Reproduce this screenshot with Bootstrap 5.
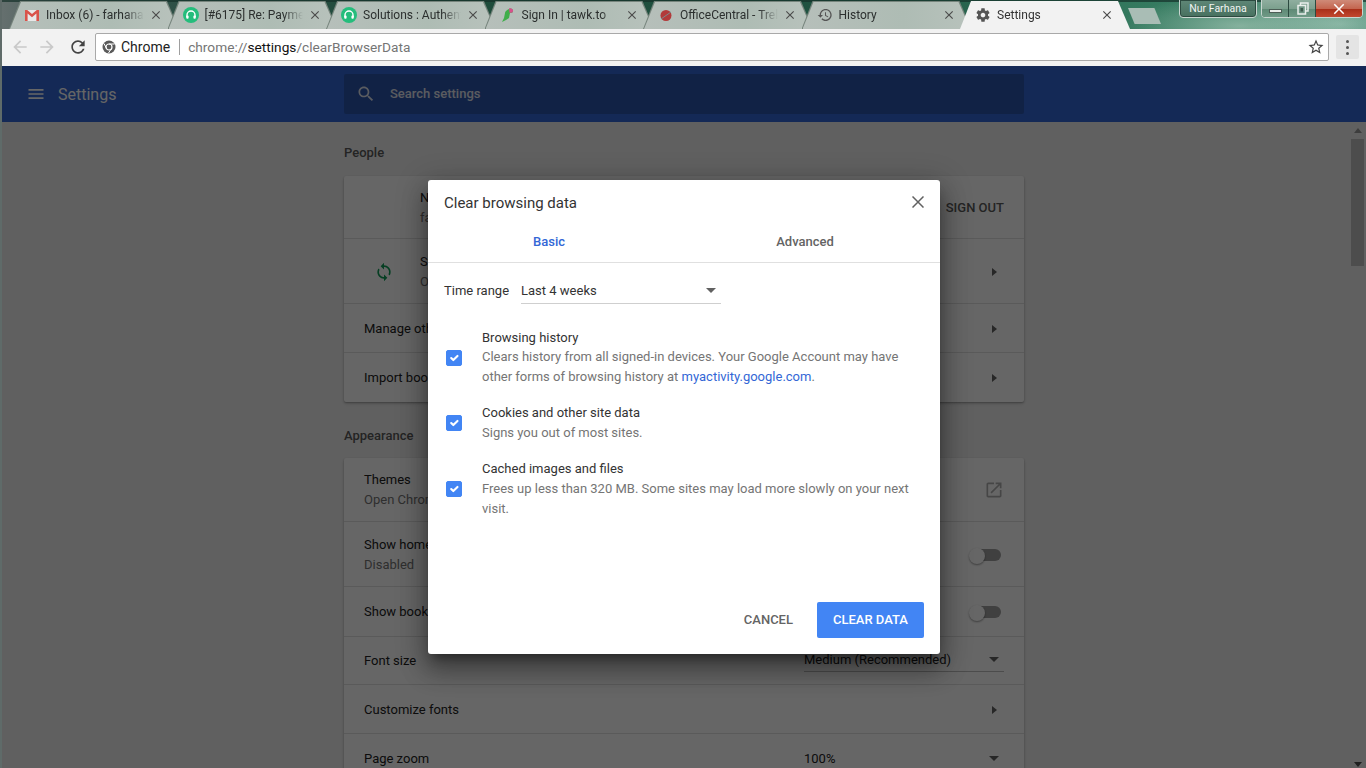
<!DOCTYPE html>
<html lang="en">
<head>
<meta charset="utf-8">
<title>Settings</title>
<link href="https://cdn.jsdelivr.net/npm/bootstrap@5.3.0/dist/css/bootstrap.min.css" rel="stylesheet">
<style>
html,body{height:768px;overflow:hidden;margin:0}
body{font-family:Roboto,"Liberation Sans",sans-serif;font-size:13px;line-height:20px;color:#333;background:#777}
.app-root{width:1366px;height:768px;border-left:2px solid #5f6b69;display:flex;flex-direction:column;position:relative;overflow:hidden}
.ico{display:block;flex:none}
.ico:not([fill]){fill:currentColor}
/* tab strip */
.strip{height:29px;flex:none;margin-left:-2px;position:relative;overflow:hidden;background:radial-gradient(ellipse 120px 30px at 1240px 26px,rgba(190,215,200,.55),transparent),radial-gradient(ellipse 90px 30px at 1340px 24px,rgba(170,205,190,.6),transparent),linear-gradient(90deg,#66706f 0,#33524a 8%,#1e4a3a 30%,#1f5240 60%,#347a5f 84%,#4f8e78 100%)}
.strip-top{height:2px;background:#15302a;position:absolute;left:0;right:0;top:0;opacity:.7}
.tabs-row{position:absolute;left:9px;top:1px;display:flex}
.tabx{width:170px;height:28px;margin-right:-11.5px;position:relative;display:flex;align-items:center;padding:0 16px 0 15px;font-size:12px;color:#2b2f2e;clip-path:polygon(0 100%,11px 0,calc(100% - 12px) 0,100% 100%);background:#76847c}
.tabx::before{content:"";position:absolute;inset:1px 1px 0 1px;clip-path:polygon(0 100%,11px 0,calc(100% - 12px) 0,100% 100%);background:linear-gradient(90deg,#b6bfba,#aebcb4 60%,#b8c2bc)}
.tabx>*{position:relative}
.tabx.is-on{background:#f2f2f2;z-index:2;color:#333}
.tabx.is-on::before{background:#f2f2f2}
.tab-ic{width:16px;height:16px;margin:0 6px 0 0;color:#555}
.tab-tx{flex:1;white-space:nowrap;overflow:hidden;-webkit-mask-image:linear-gradient(90deg,#000 78%,transparent 97%);mask-image:linear-gradient(90deg,#000 78%,transparent 97%)}
.tab-x{width:14px;height:14px;color:#4c4c4c;margin-left:2px}
.newtab{position:absolute;left:1128px;top:8px;width:33px;height:16px;background:#a9bdb5;clip-path:polygon(0 0,80% 0,100% 100%,20% 100%)}
.prof{position:absolute;left:1179px;top:-1px;width:78px;height:19px;border:1px solid #c9d6d0;border-radius:0 0 4px 4px;background:linear-gradient(180deg,#5f8777,#47705f);color:#f2f5f3;font-size:10.5px;line-height:17px;text-align:center;box-shadow:inset 0 0 0 1px #2c4a40}
.winbtns{position:absolute;left:1261px;top:-1px;width:102px;height:19px;display:flex;border:1px solid #c9d6d0;border-radius:0 0 4px 4px;overflow:hidden;box-shadow:inset 0 0 0 1px #2c4a40}
.winb{display:flex;align-items:center;justify-content:center;background:linear-gradient(180deg,#8fae9f 0,#7ca08e 50%,#5f8a76 55%,#6f9a86 100%);border-right:1px solid #2c4a40;width:27px}
.winb.is-close{flex:1;border-right:0;background:linear-gradient(180deg,#cf8a78 0,#c46650 50%,#a9301a 55%,#c2482f 100%);color:#fff}
.glyph-min{width:13px;height:4px;background:#e9eeeb;border:1px solid #4b5d55;margin-top:4px}
/* toolbar */
.tbar{height:37px;flex:none;background:#f2f2f2;display:flex;align-items:center;position:relative}
.tbtn-dis{color:#c9c9c9;width:20px;height:20px}
.tbtn-rel{color:#444;width:20px;height:20px}
.navbtns{display:flex;align-items:center;padding-left:8px;gap:7px;width:93px;margin-top:-1px}
.omni{width:1234px;height:28px;background:#fff;border:1px solid #a9a9a9;border-radius:2px;display:flex;align-items:center;padding-left:6px;font-size:14px;color:#757575;position:relative;margin-top:-2px}
.omni-chip{color:#222;padding-left:5px;padding-right:10px;margin-right:8px;position:relative}
.omni-chip::after{content:"";position:absolute;right:0;top:2px;bottom:2px;width:1px;background:#9e9e9e}
.omni-url{font-size:13.7px}
.omni b{font-weight:400;color:#111}
.omni-star{margin-left:auto;width:18px;height:18px;color:#444;margin-right:3px}
.menu3{width:23px;height:24px;background:#e4e4e4;border-radius:2px;margin-left:7px;margin-top:-1px;display:flex;flex-direction:column;align-items:center;justify-content:center;gap:3px}
.menu3 i{display:block;width:3px;height:3px;background:#555;border-radius:50%}
/* page */
.hdr{height:56px;flex:none;background:#3367d6;color:#fff;display:flex;align-items:center}
.hdr-left{width:342px;flex:none;display:flex;align-items:center;padding-left:24px;gap:12px;font-size:16px}
.hdr-left span{position:relative;top:1px}
.srch{width:680px;height:40px;background:#2b55ad;border-radius:2px;display:flex;align-items:center;padding-left:12px;gap:14px;font-weight:500;color:#e2e6f0}
.pg{flex:1;background:#f1f1f1;position:relative;min-height:0;overflow:hidden}
.pg-col{width:680px;margin-left:342px}
.sec-t{font-weight:500;color:#5a5a5a;line-height:20px}
.sec-t.first{padding-top:21px;padding-bottom:13px}
.sec-t.next{padding-top:24px;padding-bottom:12px}
.cardx{border:0;border-radius:2px;box-shadow:0 1px 2px rgba(0,0,0,.3),0 2px 5px rgba(0,0,0,.1);overflow:hidden;--bs-card-bg:#fff}
.rowx{display:flex;align-items:center;padding:0 20px;border-color:#e0e0e0;background:#fff;color:#222;font-size:13px;line-height:20px}
.rowx.low{padding-top:2px}
.rowx small{display:block;color:#757575;font-size:13px}
.h63{height:63px}.h65{height:65px}.h49{height:49px}.h64{height:64px}.h50{height:50px}.h48{height:48px}
.r-end{margin-left:auto}
.tri-r{width:0;height:0;border-left:5px solid #616161;border-top:4.5px solid transparent;border-bottom:4.5px solid transparent;margin-right:7px}
.tri-d{width:0;height:0;border-top:5px solid #616161;border-left:5.5px solid transparent;border-right:5.5px solid transparent}
.sel-set{margin-left:auto;width:200px;display:flex;align-items:center;justify-content:space-between;border-bottom:1px solid #bdbdbd;height:24px;padding:1px 5px 0 0;margin-top:-2px}
.sel-set.bare{margin-top:0}
.sw{position:relative;width:32px;height:16px;margin-right:3px;display:block}
.sw.dn{margin-top:2px}
.sw::before{content:"";position:absolute;left:6px;right:0;top:1px;height:12px;background:#a0a0a0;border-radius:6px}
.sw::after{content:"";position:absolute;left:0;top:0;width:16px;height:16px;background:#fff;border-radius:50%;box-shadow:0 1px 2px rgba(0,0,0,.4)}
.signout{font-weight:500;color:#5a5a5a;font-size:13px}
.syncic{width:20px;height:20px;color:#0f9d58;margin:0 26px 0 10px}
.extic{color:#b0b0b0}
.indent{padding-left:56px}
.sbar{position:absolute;right:0;top:0;bottom:0;width:16px;background:#f1f1f1}
.sbar-th{position:absolute;left:1px;right:2px;top:17px;height:127px;background:#c1c1c1}
.sbar-up{position:absolute;left:3.5px;top:6px;border-bottom:5px solid #9a9a9a;border-left:4px solid transparent;border-right:4px solid transparent}
.sbar-dn{position:absolute;left:3.5px;bottom:1px;border-top:5px solid #505050;border-left:4px solid transparent;border-right:4px solid transparent}
.scrim{position:absolute;left:-2px;right:0;top:66px;bottom:0;background:rgba(0,0,0,.6);z-index:5}
/* dialog */
.dlg{position:absolute;left:428px;top:180px;width:512px;height:474px;z-index:6;border:0;border-radius:3px;display:flex;flex-direction:column;background:#fff;box-shadow:0 16px 24px 2px rgba(0,0,0,.28),0 6px 30px 5px rgba(0,0,0,.2),0 8px 10px -5px rgba(0,0,0,.4)}
.dlg-h{height:46px;flex:none;display:flex;align-items:center;padding:0 16px 0 16px;font-size:15px;color:#333}
.dlg-x{width:12px;height:12px;stroke:#616161;stroke-width:1.5;margin-left:auto;margin-top:-2px}
.dlg-tabs{height:37px;flex:none;display:flex;border-bottom:1px solid #e0e0e0;margin:0;flex-wrap:nowrap}
.dlg-tab{width:256px;text-align:center;font-weight:500;color:#646464;padding:0;line-height:32px;position:relative;left:-7px}
.dlg-tab.is-on{color:#3367d6}
.dlg-b{flex:1;padding:16px 16px 0;min-height:0}
.tr-row{display:flex;align-items:center;color:#333;height:24px;margin-bottom:25px}
.tr-sel{margin-left:12px;width:200px;height:25px;border-bottom:1px solid #cfcfcf;display:flex;align-items:center;justify-content:space-between;padding:1px 5px 1px 0}
.cb-row{display:flex;align-items:center;margin-bottom:16px;line-height:20px}
.cb-row .form-check-input{width:16px;height:16px;margin:0 20px 0 2px;flex:none;border-radius:2px;background-color:#4285f4;border-color:#4285f4}
.cb-t{color:#333}
.cb-t.tight{margin-bottom:-1px}
.cb-d{color:#757575}
.cb-d a{color:#3367d6;text-decoration:none}
.dlg-f{display:flex;justify-content:flex-end;gap:8px;padding:0 16px 16px}
.btn-c,.btn-k{font-size:13px;font-weight:500;height:36px;padding:0 16px;border-radius:2px;text-transform:uppercase;line-height:36px;border:0}
.btn-c{color:#646464;background:transparent}
.btn-k{color:#fff;background:#4285f4}
</style>
</head>
<body>
<svg width="0" height="0" class="position-absolute">
<defs>
<symbol id="i-x" viewBox="0 0 24 24"><path d="M19 6.41L17.59 5 12 10.59 6.41 5 5 6.41 10.59 12 5 17.59 6.41 19 12 13.41 17.59 19 19 17.59 13.41 12z"/></symbol>
<symbol id="i-hs" viewBox="0 0 16 16"><circle cx="8" cy="8" r="8" fill="#25bd7c"/><path d="M4 10V8a4 4 0 0 1 8 0v2" fill="none" stroke="#fff" stroke-width="1.4"/><rect x="3.2" y="8.4" width="2.4" height="3.4" rx="1" fill="#fff"/><rect x="10.4" y="8.4" width="2.4" height="3.4" rx="1" fill="#fff"/></symbol>
</defs>
</svg>
<div class="app-root">
  <div class="strip">
    <div class="strip-top"></div>
    <div class="tabs-row">
      <div class="tabx"><svg class="ico tab-ic" viewBox="0 0 16 16"><rect x="1" y="3" width="14" height="11" fill="#e8e8e8"/><path d="M1 3h2.200L8 7l4.800-4H15v11h-2.600V6.600L8 10.200 3.600 6.600V14H1z" fill="#d9534a"/></svg><span class="tab-tx">Inbox (6) - farhana@officecentral</span><svg class="ico tab-x"><use href="#i-x"/></svg></div>
      <div class="tabx"><svg class="ico tab-ic"><use href="#i-hs"/></svg><span class="tab-tx">[#6175] Re: Payment</span><svg class="ico tab-x"><use href="#i-x"/></svg></div>
      <div class="tabx"><svg class="ico tab-ic"><use href="#i-hs"/></svg><span class="tab-tx">Solutions : Authentication</span><svg class="ico tab-x"><use href="#i-x"/></svg></div>
      <div class="tabx"><svg class="ico tab-ic" viewBox="0 0 16 16"><path d="M9 2c2-1 4 0 4 2s-2 2-3 2l-1 5-3 2-4 2 2-4 1-5c0-2 2-3 4-4z" fill="#3fae4a"/><path d="M9 1.500c2-.8 4 .2 4 2.300s-2 2.200-3.500 2z" fill="#d8508c"/></svg><span class="tab-tx">Sign In | tawk.to</span><svg class="ico tab-x"><use href="#i-x"/></svg></div>
      <div class="tabx"><svg class="ico tab-ic" viewBox="0 0 16 16"><circle cx="8" cy="8.500" r="5.500" fill="#b23a3a"/><path d="M3 12L13 5" stroke="#7b8a8a" stroke-width="1"/></svg><span class="tab-tx">OfficeCentral - Trello board</span><svg class="ico tab-x"><use href="#i-x"/></svg></div>
      <div class="tabx"><svg class="ico tab-ic" viewBox="0 0 24 24"><path d="M13 3c-4.970 0-9 4.030-9 9H1l3.890 3.890.07.14L9 12H6c0-3.870 3.130-7 7-7s7 3.130 7 7-3.130 7-7 7c-1.930 0-3.680-.79-4.940-2.060l-1.420 1.420C8.270 19.990 10.510 21 13 21c4.970 0 9-4.030 9-9s-4.030-9-9-9zm-1 5v5l4.280 2.540.72-1.210-3.500-2.080V8H12z"/></svg><span class="tab-tx">History</span><svg class="ico tab-x"><use href="#i-x"/></svg></div>
      <div class="tabx is-on"><svg class="ico tab-ic" viewBox="0 0 24 24"><path d="M19.430 12.980c.04-.32.07-.64.07-.98s-.03-.66-.07-.98l2.110-1.650c.19-.15.24-.42.12-.64l-2-3.460c-.12-.22-.39-.3-.61-.22l-2.490 1c-.52-.4-1.080-.73-1.690-.98l-.38-2.650C14.460 2.180 14.250 2 14 2h-4c-.25 0-.46.18-.49.42l-.38 2.650c-.61.25-1.170.59-1.690.98l-2.490-1c-.23-.09-.49 0-.61.22l-2 3.460c-.13.22-.07.49.12.64l2.110 1.650c-.04.32-.07.65-.07.98s.03.66.07.98l-2.110 1.650c-.19.15-.24.42-.12.64l2 3.460c.12.22.39.3.61.22l2.490-1c.52.4 1.080.73 1.690.98l.38 2.650c.03.24.24.42.49.42h4c.25 0 .46-.18.49-.42l.38-2.650c.61-.25 1.170-.59 1.690-.98l2.490 1c.23.09.49 0 .61-.22l2-3.460c.12-.22.07-.49-.12-.64l-2.110-1.650zM12 15.500c-1.930 0-3.500-1.570-3.500-3.500s1.570-3.500 3.500-3.500 3.500 1.570 3.500 3.500-1.570 3.500-3.500 3.500z"/></svg><span class="tab-tx">Settings</span><svg class="ico tab-x"><use href="#i-x"/></svg></div>
    </div>
    <div class="newtab"></div>
    <div class="prof">Nur Farhana</div>
    <div class="winbtns">
      <div class="winb"><span class="glyph-min"></span></div>
      <div class="winb"><svg class="ico" width="13" height="13" viewBox="0 0 13 13"><rect x="4.500" y="1" width="7.500" height="8" fill="none" stroke="#e9eeeb" stroke-width="1.500"/><rect x="2" y="3.500" width="7.500" height="8.500" fill="#6f9685" stroke="#e9eeeb" stroke-width="1.500"/><rect x="4.500" y="6" width="2.500" height="3.500" fill="#3f5a4e"/></svg></div>
      <div class="winb is-close"><svg class="ico" width="18" height="18"><use href="#i-x"/></svg></div>
    </div>
  </div>

  <div class="tbar">
    <div class="navbtns">
      <svg class="ico tbtn-dis" viewBox="0 0 24 24"><path d="M20 11H7.830l5.590-5.590L12 4l-8 8 8 8 1.410-1.410L7.830 13H20v-2z"/></svg>
      <svg class="ico tbtn-dis" viewBox="0 0 24 24"><path d="M12 4l-1.410 1.410L16.170 11H4v2h12.170l-5.580 5.590L12 20l8-8z"/></svg>
      <svg class="ico tbtn-rel ms-1" viewBox="0 0 24 24"><path d="M17.650 6.350C16.200 4.900 14.210 4 12 4c-4.420 0-7.990 3.580-7.990 8s3.570 8 7.990 8c3.730 0 6.840-2.550 7.730-6h-2.080c-.82 2.330-3.040 4-5.650 4-3.310 0-6-2.690-6-6s2.690-6 6-6c1.660 0 3.140.69 4.220 1.780L13 11h7V4l-2.350 2.350z"/></svg>
    </div>
    <div class="omni">
      <svg class="ico" width="14" height="14" viewBox="0 0 14 14"><circle cx="7" cy="7" r="6.500" fill="#5a5a5a"/><circle cx="7" cy="7" r="3" fill="#5a5a5a" stroke="#fff" stroke-width="1.200"/><path d="M7 4h5.500M4.500 8.500L2 3.500M9.500 8.500L6.500 13" stroke="#fff" stroke-width="1"/></svg>
      <span class="omni-chip">Chrome</span>
      <span class="omni-url">chrome://<b>settings</b>/clearBrowserData</span>
      <svg class="ico omni-star" viewBox="0 0 24 24"><path d="M22 9.240l-7.190-.62L12 2 9.190 8.630 2 9.240l5.460 4.730L5.820 21 12 17.270 18.180 21l-1.630-7.030L22 9.240zM12 15.400l-3.760 2.270 1-4.280-3.320-2.880 4.380-.38L12 6.100l1.710 4.040 4.380.38-3.320 2.880 1 4.280L12 15.400z"/></svg>
    </div>
    <div class="menu3"><i></i><i></i><i></i></div>
  </div>

  <div class="hdr">
    <div class="hdr-left"><svg class="ico" width="20" height="20" viewBox="0 0 24 24"><path d="M3 18h18v-2H3v2zm0-5h18v-2H3v2zm0-7v2h18V6H3z"/></svg><span>Settings</span></div>
    <div class="srch"><svg class="ico" width="20" height="20" viewBox="0 0 24 24"><path d="M15.500 14h-.79l-.28-.27C15.410 12.590 16 11.110 16 9.500 16 5.910 13.090 3 9.500 3S3 5.910 3 9.500 5.910 16 9.500 16c1.610 0 3.090-.59 4.230-1.570l.27.28v.79l5 4.990L20.490 19l-4.990-5zm-6 0C7.010 14 5 11.990 5 9.500S7.010 5 9.500 5 14 7.010 14 9.500 11.990 14 9.500 14z"/></svg><span>Search settings</span></div>
  </div>

  <div class="pg">
    <div class="pg-col">
      <div class="sec-t first">People</div>
      <div class="card cardx">
        <div class="list-group list-group-flush">
          <div class="list-group-item rowx h63 low"><div class="indent"><div>Nur Farhana</div><small>farhana@officecentral.asia</small></div><span class="r-end signout">SIGN OUT</span></div>
          <div class="list-group-item rowx h65 low"><svg class="ico syncic" viewBox="0 0 24 24"><path d="M12 4V1L8 5l4 4V6c3.310 0 6 2.690 6 6 0 1.010-.25 1.970-.7 2.800l1.460 1.460C19.540 15.030 20 13.570 20 12c0-4.420-3.580-8-8-8zm0 14c-3.310 0-6-2.690-6-6 0-1.010.25-1.970.7-2.800L5.240 7.740C4.460 8.970 4 10.430 4 12c0 4.420 3.580 8 8 8v3l4-4-4-4v3z"/></svg><div><div>Sync</div><small>On</small></div><span class="r-end tri-r"></span></div>
          <div class="list-group-item rowx h49 low">Manage other people<span class="r-end tri-r"></span></div>
          <div class="list-group-item rowx h49">Import bookmarks and settings<span class="r-end tri-r"></span></div>
        </div>
      </div>
      <div class="sec-t next">Appearance</div>
      <div class="card cardx">
        <div class="list-group list-group-flush">
          <div class="list-group-item rowx h64"><div><div>Themes</div><small>Open Chrome Web Store</small></div><svg class="ico extic r-end" width="20" height="20" viewBox="0 0 24 24"><path d="M19 19H5V5h7V3H5c-1.110 0-2 .9-2 2v14c0 1.100.89 2 2 2h14c1.100 0 2-.9 2-2v-7h-2v7zM14 3v2h3.590l-9.830 9.830 1.410 1.410L19 6.410V10h2V3h-7z"/></svg></div>
          <div class="list-group-item rowx h65 low"><div><div>Show home button</div><small>Disabled</small></div><span class="r-end sw dn"></span></div>
          <div class="list-group-item rowx h50">Show bookmarks bar<span class="r-end sw dn"></span></div>
          <div class="list-group-item rowx h48">Font size<div class="sel-set"><span>Medium (Recommended)</span><span class="tri-d"></span></div></div>
          <div class="list-group-item rowx h49 low">Customize fonts<span class="r-end tri-r"></span></div>
          <div class="list-group-item rowx h49">Page zoom<div class="sel-set bare"><span>100%</span><span class="tri-d"></span></div></div>
        </div>
      </div>
    </div>
    <div class="sbar"><div class="sbar-up"></div><div class="sbar-th"></div><div class="sbar-dn"></div></div>
  </div>

  <div class="scrim"></div>
</div>

<div class="modal-content dlg">
  <div class="dlg-h"><span>Clear browsing data</span><svg class="ico dlg-x" fill="none" viewBox="0 0 12 12"><path d="M.5.500l11 11M11.500.500l-11 11"/></svg></div>
  <div class="nav dlg-tabs"><span class="nav-item dlg-tab is-on">Basic</span><span class="nav-item dlg-tab">Advanced</span></div>
  <div class="dlg-b">
    <div class="tr-row"><span>Time range</span><div class="tr-sel"><span>Last 4 weeks</span><span class="tri-d"></span></div></div>
    <div class="cb-row"><input class="form-check-input" type="checkbox" checked aria-label="Browsing history"><div><div class="cb-t tight">Browsing history</div><div class="cb-d">Clears history from all signed-in devices. Your Google Account may have<br>other forms of browsing history at <a href="#">myactivity.google.com</a>.</div></div></div>
    <div class="cb-row"><input class="form-check-input" type="checkbox" checked aria-label="Cookies and other site data"><div><div class="cb-t">Cookies and other site data</div><div class="cb-d">Signs you out of most sites.</div></div></div>
    <div class="cb-row"><input class="form-check-input" type="checkbox" checked aria-label="Cached images and files"><div><div class="cb-t">Cached images and files</div><div class="cb-d">Frees up less than 320 MB. Some sites may load more slowly on your next<br>visit.</div></div></div>
  </div>
  <div class="dlg-f"><button class="btn btn-c">Cancel</button><button class="btn btn-k">Clear data</button></div>
</div>
<script src="https://cdn.jsdelivr.net/npm/bootstrap@5.3.0/dist/js/bootstrap.bundle.min.js"></script>
</body>
</html>
